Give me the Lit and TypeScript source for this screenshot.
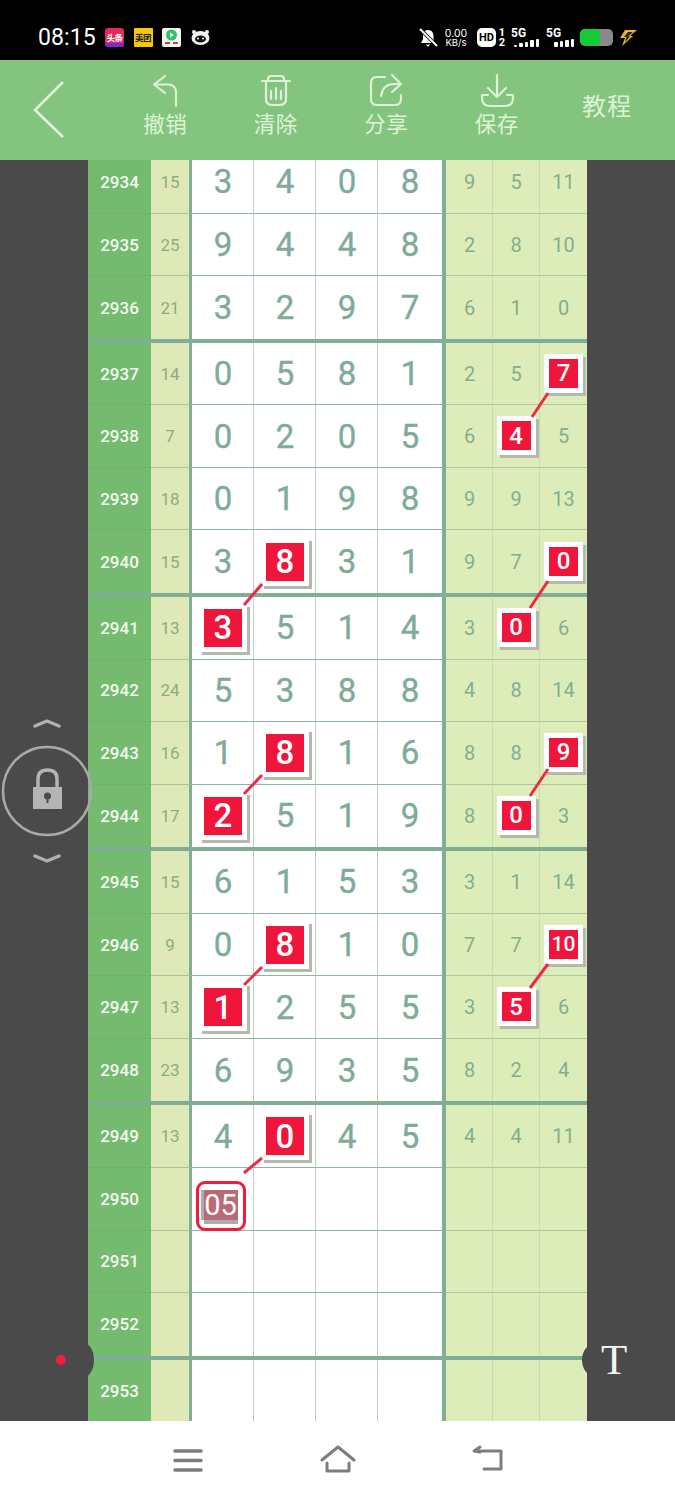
import { LitElement, html, css, svg } from "lit";
import { customElement } from "lit/decorators.js";

type Row = { id: number; sum: string; main: string[]; side: string[]; mark?: number[]; sel?: boolean };
const mk = (id: number, sum: string, m: string, s: string, mark: number[] = []): Row => ({
  id, sum, main: m.split(""), side: s.split(" "), mark,
});
const empty = (id: number): Row => ({ id, sum: "", main: ["", "", "", ""], side: ["", "", ""] });
const groups: Row[][] = [
  [mk(2934, "15", "3408", "9 5 11"), mk(2935, "25", "9448", "2 8 10"), mk(2936, "21", "3297", "6 1 0")],
  [mk(2937, "14", "0581", "2 5 7", [6]), mk(2938, "7", "0205", "6 4 5", [5]), mk(2939, "18", "0198", "9 9 13"), mk(2940, "15", "3831", "9 7 0", [1, 6])],
  [mk(2941, "13", "3514", "3 0 6", [0, 5]), mk(2942, "24", "5388", "4 8 14"), mk(2943, "16", "1816", "8 8 9", [1, 6]), mk(2944, "17", "2519", "8 0 3", [0, 5])],
  [mk(2945, "15", "6153", "3 1 14"), mk(2946, "9", "0810", "7 7 10", [1, 6]), mk(2947, "13", "1255", "3 5 6", [0, 5]), mk(2948, "23", "6935", "8 2 4")],
  [mk(2949, "13", "4045", "4 4 11", [1]),
   { id: 2950, sum: "", main: ["05", "", "", ""], side: ["", "", ""], sel: true },
   empty(2951), empty(2952)],
  [empty(2953)],
];
// connector segments between paired badges, in page coordinates
const links = [
  [548, 393, 532, 417], [548, 581, 530, 608], [548, 769, 530, 796], [548, 964, 530, 988],
  [262, 584, 244, 605], [262, 775, 244, 794], [262, 967, 244, 985], [262, 1158, 244, 1173],
];

@customElement("app-root")
export class AppRoot extends LitElement {
  static styles = css`
    :host { display: block; width: 675px; height: 1500px; background: #fff; overflow: hidden; font-family: "Roboto", "Noto Sans CJK SC", sans-serif; }
    .status { height: 60px; background: #000; display: flex; align-items: center; color: #fff; padding-left: 38px; box-sizing: border-box; padding-top: 15px; }
    .time { font-size: 23px; line-height: 24px; width: 67px; letter-spacing: 0.1px; }
    .app { width: 19px; height: 19px; margin-right: 9.5px; display: block; flex: none; }
    .tile { display: flex; flex-direction: column; align-items: center; justify-content: center; font-size: 8.5px; line-height: 10px; font-weight: 700; overflow: hidden; border-radius: 3px; letter-spacing: -0.5px; }
    .tile.pink { background: #e8285c; color: #fff; box-shadow: inset 0 -4px 0 #7a2bd0; }
    .tile.yellow { background: #f7c80a; color: #222; border-radius: 1px; }
    .spacer { flex: 1; }
    .kb { width: 24px; margin: 0 9px 0 6px; font-size: 9.5px; line-height: 9px; text-align: center; font-family: "Inter", sans-serif; padding-top: 1px; }
    .kb b { display: block; font-size: 10.5px; font-weight: 400; }
    .hd { width: 19px; height: 19px; background: #fff; color: #000; font-size: 11px; font-weight: 700; border-radius: 5px; display: flex; align-items: center; justify-content: center; }
    .frac { width: 10px; margin-left: 1px; font-size: 11px; line-height: 10px; font-weight: 700; text-align: center; }
    .net { width: 28px; margin-left: 4px; display: flex; flex-direction: column; font-size: 12px; line-height: 11px; font-weight: 700; margin-right: 3px; }
    .bars { display: flex; gap: 2px; align-items: flex-end; height: 8px; justify-content: flex-end; }
    .bars i { width: 3.5px; background: #fff; border-radius: 1px; }
    .batt { width: 33px; height: 17px; border-radius: 5px; background: #8a8a8a; overflow: hidden; margin-left: 3px; }
    .batt i { display: block; width: 20px; height: 17px; background: #11cc33; border-radius: 5px; }
    .bolt { margin: 0 38px 0 6px; display: block; }

    .bar { height: 100px; background: #83c57f; display: flex; position: relative; color: #dff2d8; }
    .back { width: 110px; display: flex; flex: none; }
    .tool { width: 110.5px; display: flex; flex-direction: column; align-items: center; font-size: 21.5px; line-height: 26px; letter-spacing: 0.5px; padding-top: 14px; box-sizing: border-box; flex: none; }
    .tool svg { display: block; height: 37px; margin: -1px 0 2px; }
    .course { flex: 1; font-size: 24px; display: flex; align-items: center; padding-left: 30px; letter-spacing: 1px; box-sizing: border-box; height: 100px; padding-bottom: 11px; }

    .body { height: 1261px; background: #4a4a4a; display: flex; position: relative; overflow: hidden; }
    .gutter { width: 88px; flex: none; }
    .table { width: 499px; flex: none; margin-top: -8.8px; position: relative; }
    .row { display: grid; grid-template-columns: 63px 41px 62px 62px 62px 68px 47px 47px 47px; height: 62.56px; }
    .cell { box-sizing: border-box; display: flex; align-items: center; justify-content: center; position: relative; border-bottom: 1px solid #8fb3a5; color: #7fab9a; }
    .row.last .cell { border-bottom: 0; }
    .sep { height: 4px; background: #7fae94; }
    .id { background: #74bb70; color: #f4faf2; font-size: 17px; font-weight: 500; border-bottom-color: #70b46c; }
    .sum { background: #dfe9b8; border-right: 3px solid #7fae94; color: #8dab85; font-size: 17px; border-bottom-color: #a8c49f; }
    .m { background: #fff; font-size: 33px; font-weight: 400; -webkit-text-stroke: 0.4px #7fab9a; border-right: 1px solid #b8d2c8; padding-left: 1px; }
    .m.d { border-right: 4px solid #7fae94; padding-left: 0; }
    .s { background: #dcedb9; font-size: 20px; color: #85ad8e; border-right: 1px solid #c6dcaa; border-bottom-color: #a9c6a0; }
    .s.f { padding-left: 1px; }
    .s.e { border-right: 0; }
    .badge { width: 38px; height: 38px; background: #f0153a; color: #fff; font-weight: 500; font-size: 33px; -webkit-text-stroke: 0; border: 5px solid #fff; box-shadow: 3px 3px 0 #b4b9ae; display: flex; align-items: center; justify-content: center; z-index: 2; flex: none; box-sizing: content-box; }
    .s .badge { width: 29px; height: 29px; font-size: 24px; margin-top: -1px; }
    .s .badge.wide { font-size: 21px; }
    .sel { width: 50px; height: 50px; box-sizing: border-box; border: 3px solid #ee1c3f; border-radius: 9px; background: #fff; padding: 6px 5px 8px 5px; display: flex; flex: none; z-index: 2; align-self: flex-end; margin: 0 5px -1px 0; }
    .sel span { flex: 1; background: #b96b75; color: #fff; font-size: 29px; font-weight: 400; -webkit-text-stroke: 0; display: flex; align-items: center; justify-content: center; box-shadow: -3px 0 0 #a9aea6, 0 4px 0 #a9aea6; }
    .links { position: absolute; left: 88px; top: 0; width: 499px; height: 1261px; z-index: 3; pointer-events: none; }
    .float { position: absolute; display: block; z-index: 4; }
    .bulge { position: absolute; background: #4a4a4a; border-radius: 50%; z-index: 4; }
    .bl { left: 70px; top: 1182px; width: 24px; height: 36px; }
    .br { left: 582px; top: 1184px; width: 24px; height: 32px; }
    .dot { position: absolute; left: 56px; top: 1195px; width: 10px; height: 10px; border-radius: 50%; background: #f0203c; z-index: 5; }
    .t { position: absolute; left: 601px; top: 1175px; color: #f4f4f4; font: 400 43px/50px "Liberation Serif", serif; z-index: 5; }

    .nav { height: 79px; display: flex; background: #fff; }
    .nav svg { display: block; }
  `;

  private cell(r: Row, v: string, i: number) {
    const side = i >= 4;
    const marked = r.mark?.includes(i);
    const cls = side ? `cell s ${i === 6 ? "e" : ""} ${i === 4 ? "f" : ""}` : `cell m ${i === 3 ? "d" : ""}`;
    if (r.sel && i === 0) return html`<div class=${cls}><div class="sel"><span>${v}</span></div></div>`;
    return html`<div class=${cls}>${marked ? html`<div class="badge ${v.length > 1 ? "wide" : ""}">${v}</div>` : v}</div>`;
  }

  render() {
    return html`
      <div class="status">
        <div class="time">08:15</div>
        <div class="app tile pink"><span>头条</span></div>
        <div class="app tile yellow"><span>美团</span></div>
        <svg class="app" viewBox="0 0 19 19"><rect width="19" height="19" rx="2" fill="#f5f5f5"/><circle cx="9.5" cy="7" r="5.5" fill="#2fc46a"/><path d="M8 4.5l4 2.5-4 2.5z" fill="#fff"/><path d="M3 15h5M11 15h5" stroke="#e33" stroke-width="2"/></svg>
        <svg class="app" viewBox="0 0 19 19"><ellipse cx="9.5" cy="10" rx="9" ry="7" fill="#f4f4f4"/><ellipse cx="9.5" cy="11" rx="5.5" ry="3.5" fill="#111"/><circle cx="7" cy="10.5" r="1" fill="#fff"/><circle cx="12" cy="10.5" r="1" fill="#fff"/><circle cx="3" cy="4" r="2" fill="#f4f4f4"/><circle cx="16" cy="4" r="2" fill="#f4f4f4"/></svg>
        <div class="spacer"></div>
        <svg width="19" height="20" viewBox="0 0 19 20"><path d="M9 2c4 0 5.500 3 5.500 6v4l2 3H2l2-4V8c0-3 1-6 5-6zM7 16.500h4L9 19z" fill="#fff"/><path d="M1 1l17 17" stroke="#000" stroke-width="3.500"/><path d="M1 1l17 17" stroke="#fff" stroke-width="2"/></svg>
        <div class="kb"><b>0.00</b>KB/s</div>
        <div class="hd">HD</div>
        <div class="frac">1<br />2</div>
        <div class="net">5G<div class="bars"><i style="height:2px"></i><i style="height:4px"></i><i style="height:5px"></i><i style="height:7px"></i><i style="height:8px"></i></div></div>
        <div class="net">5G<div class="bars"><i style="height:5px"></i><i style="height:6px"></i><i style="height:7px"></i><i style="height:8px"></i></div></div>
        <div class="batt"><i></i></div>
        <svg class="bolt" width="18" height="16" viewBox="0 0 18 16"><path d="M6 0h12L11 6h3L3 16l3-8H1z" fill="#e8b52e"/><path d="M9 2h5L9 6.500h2L6 12l1.500-5H5z" fill="#222"/></svg>
      </div>

      <div class="bar">
        <div class="back">
          <svg width="110" height="100" viewBox="0 0 110 100"><path d="M63 22 35 50 63 77" fill="none" stroke="#e3f3dc" stroke-width="2.600"/></svg>
        </div>
        <div class="tool">
          <svg width="40" height="37" viewBox="145 73 40 37" fill="none" stroke="#dff2d8" stroke-width="2.200" stroke-linecap="round" stroke-linejoin="round"><path d="M165 76l-11 8.500 11 8.500M154 84.500h14q8 0 8 8.500v13"/></svg>
          撤销
        </div>
        <div class="tool">
          <svg width="40" height="37" viewBox="256 73 40 37" fill="none" stroke="#dff2d8" stroke-width="2.200" stroke-linecap="round" stroke-linejoin="round"><path d="M262 81h28M268 81v-2q0-3 3-3h10q3 0 3 3v2M266 81v18q0 6 6 6h8q6 0 6-6V81M271 91v8M276 88v11M281 91v8"/></svg>
          清除
        </div>
        <div class="tool">
          <svg width="40" height="37" viewBox="367 73 40 37" fill="none" stroke="#dff2d8" stroke-width="2.200" stroke-linecap="round" stroke-linejoin="round"><path d="M386 77h-8q-6 0-6 6v16q0 6 6 6h18q6 0 6-6v-4M393 75l9 9-9 8M402 84h-7q-11 0-13 12"/></svg>
          分享
        </div>
        <div class="tool">
          <svg width="40" height="37" viewBox="477 73 40 37" fill="none" stroke="#dff2d8" stroke-width="2.200" stroke-linecap="round" stroke-linejoin="round"><path d="M497 75v21M488 88l9 9 9-9M488 95h-6v3q0 8 8 8h15q8 0 8-8v-3h-6"/></svg>
          保存
        </div>
        <div class="course">教程</div>
      </div>

      <div class="body">
        <div class="gutter"></div>
        <div class="table">
          ${groups.map((g, gi) => html`
            ${g.map((r, ri) => html`
              <div class="row ${ri === g.length - 1 ? "last" : ""}">
                <div class="cell id">${r.id}</div>
                <div class="cell sum">${r.sum}</div>
                ${[...r.main, ...r.side].map((v, i) => this.cell(r, v, i))}
              </div>`)}
            ${gi < groups.length - 1 ? html`<div class="sep"></div>` : ""}
          `)}
        </div>
        <div class="gutter"></div>

        <svg class="links" viewBox="88 160 499 1261">
          ${links.map(([a, b, c, d]) => svg`<line x1=${a} y1=${b} x2=${c} y2=${d} stroke="#ee2a48" stroke-width="3"/>`)}
        </svg>

        <svg class="float" style="left:0;top:550px" width="96" height="160" viewBox="0 710 96 160" fill="none">
          <path d="M35 726l12-5 12 5M35 856l12 5 12-5" stroke="#b0b0b0" stroke-width="3.500" stroke-linecap="round" stroke-linejoin="round"/>
          <circle cx="47" cy="791" r="44" stroke="#a9a9a9" stroke-width="2.500"/>
          <path d="M38 787v-8q0-9 9.500-9t9.500 9v8" stroke="#b4b4b4" stroke-width="3.500"/>
          <rect x="33" y="787" width="29" height="22" fill="#b4b4b4"/>
          <circle cx="47.500" cy="796" r="3.500" fill="#4a4a4a"/><path d="M46.500 797h2v6h-2z" fill="#4a4a4a"/>
        </svg>
        <div class="bulge bl"></div>
        <div class="bulge br"></div>
        <div class="dot"></div>
        <div class="t">T</div>
      </div>

      <div class="nav">
        <svg width="675" height="79" viewBox="0 1421 675 79" fill="none" stroke="#7d7d7d" stroke-width="3.500" stroke-linecap="round" stroke-linejoin="round">
          <path d="M175 1451h26M175 1460.500h26M175 1470h26"/>
          <path d="M322 1460l16-13 16 13M327 1463v8h22v-8" stroke-width="3"/>
          <path d="M480 1447l-6 4 6 1M475 1451h26v18h-17" stroke-width="3"/>
        </svg>
      </div>
    `;
  }
}
